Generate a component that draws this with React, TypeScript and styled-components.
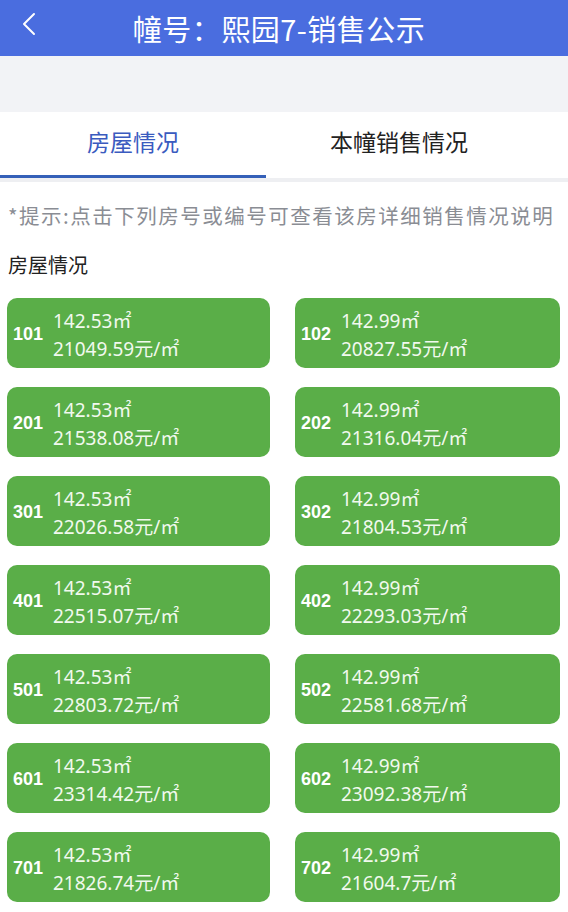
import styled, { createGlobalStyle } from "styled-components";

const GlobalStyle = createGlobalStyle`
	html, body {
		margin: 0;
		padding: 0;
		background: #ffffff;
		font-family: "Noto Sans CJK SC", "Noto Sans", sans-serif;
	}
`;

type Room = { no: string, area: string, price: string };

const rooms: Room[] = [
	{ no: "101", area: "142.53", price: "21049.59" },
	{ no: "102", area: "142.99", price: "20827.55" },
	{ no: "201", area: "142.53", price: "21538.08" },
	{ no: "202", area: "142.99", price: "21316.04" },
	{ no: "301", area: "142.53", price: "22026.58" },
	{ no: "302", area: "142.99", price: "21804.53" },
	{ no: "401", area: "142.53", price: "22515.07" },
	{ no: "402", area: "142.99", price: "22293.03" },
	{ no: "501", area: "142.53", price: "22803.72" },
	{ no: "502", area: "142.99", price: "22581.68" },
	{ no: "601", area: "142.53", price: "23314.42" },
	{ no: "602", area: "142.99", price: "23092.38" },
	{ no: "701", area: "142.53", price: "21826.74" },
	{ no: "702", area: "142.99", price: "21604.7" },
];

export default function App() {
	return (
		<>
			<GlobalStyle />
			<Page>
				<Header>
					<BackButton aria-label="back">
						<svg width="14" height="24" viewBox="0 0 14 24" fill="none">
							<path d="M12 2 L2 12 L12 22" stroke="white" strokeWidth="2" strokeLinecap="round" strokeLinejoin="round" />
						</svg>
					</BackButton>
					<Title>幢号：熙园7-销售公示</Title>
				</Header>
				<GrayBand />
				<Tabs>
					<Tab active>房屋情况</Tab>
					<Tab>本幢销售情况</Tab>
				</Tabs>
				<Hint>*提示:点击下列房号或编号可查看该房详细销售情况说明</Hint>
				<SectionTitle>房屋情况</SectionTitle>
				<Grid>
					{rooms.map((r) => (
						<Card key={r.no}>
							<RoomNo>{r.no}</RoomNo>
							<Info>
								<Line>{r.area}㎡</Line>
								<Line>{r.price}元/㎡</Line>
							</Info>
						</Card>
					))}
				</Grid>
			</Page>
		</>
	);
}

const Page = styled.div`
	width: 568px;
	min-height: 912px;
	background: #ffffff;
	overflow: hidden;
`;

const Header = styled.header`
	position: relative;
	height: 56px;
	background: #4a6ddf;
	display: flex;
	align-items: center;
	justify-content: center;
`;

const BackButton = styled.div`
	position: absolute;
	left: 22px;
	top: 12px;
	height: 24px;
	display: flex;
	align-items: center;
`;

const Title = styled.h1`
	margin: 0 0 0 -10px;
	color: #ffffff;
	font-size: 29px;
	font-weight: 400;
	letter-spacing: 0.5px;
`;

const GrayBand = styled.div`
	height: 56px;
	background: #f2f3f6;
`;

const Tabs = styled.nav`
	display: flex;
	height: 66px;
	border-bottom: 4px solid #eeeff2;
`;

const Tab = styled.div<{ active?: boolean }>`
	width: 266px;
	display: flex;
	align-items: center;
	justify-content: center;
	font-size: 23px;
	color: ${props => props.active ? "#3a5bbf" : "#222222"};
	border-bottom: 3px solid ${props => props.active ? "#3560b8" : "transparent"};
	box-sizing: border-box;
	padding-bottom: 5px;
`;

const Hint = styled.p`
	margin: 18px 0 0 8px;
	font-size: 20.5px;
	letter-spacing: 1.5px;
	color: #8a8d94;
	white-space: nowrap;
`;

const SectionTitle = styled.h2`
	margin: 20px 0 0 8px;
	font-size: 20px;
	font-weight: 400;
	color: #222222;
`;

const Grid = styled.div`
	display: grid;
	grid-template-columns: 263px 265px;
	column-gap: 25px;
	row-gap: 19px;
	padding: 19px 8px 0 7px;
`;

const Card = styled.div`
	height: 70px;
	background: #5aae48;
	border-radius: 10px;
	display: flex;
	align-items: center;
	padding-left: 6px;
	color: #ffffff;
`;

const RoomNo = styled.span`
	font-family: "Liberation Sans", "Noto Sans", sans-serif;
	font-size: 18px;
	font-weight: 700;
	width: 40px;
	margin-top: 2px;
`;

const Info = styled.div`
	display: flex;
	flex-direction: column;
	gap: 6px;
	margin-top: 4px;
`;

const Line = styled.span`
	font-family: "Noto Sans", "Noto Sans CJK SC", sans-serif;
	font-size: 19px;
	line-height: 22px;
	color: #f1f9ee;
`;
